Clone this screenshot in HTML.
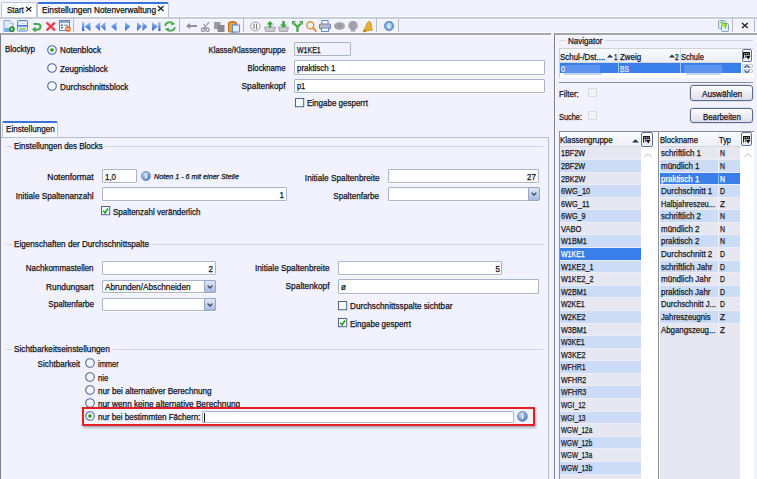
<!DOCTYPE html><html><head><meta charset="utf-8"><style>
html,body{margin:0;padding:0;width:757px;height:479px;overflow:hidden;background:#f1f2fd;}
body{position:relative;font-family:"Liberation Sans",sans-serif;}
.t{position:absolute;white-space:nowrap;}
.b{position:absolute;box-sizing:border-box;}
</style></head><body>
<div class="b" style="left:0px;top:0px;width:757px;height:17px;background:#f0f1fc;"></div>
<div class="b" style="left:0px;top:16px;width:757px;height:1px;background:#fafbff;"></div>
<div class="b" style="left:0px;top:17px;width:757px;height:2px;background:#c6cedd;"></div>
<div class="b" style="left:0px;top:19px;width:757px;height:1px;background:#fafbff;"></div>
<div class="b" style="left:1px;top:2px;width:36px;height:15.2px;background:#fbfcff;border:1px solid #bec6d6;border-bottom:none;border-radius:2px 2px 0 0;"></div>
<div class="t" style="left:7.00px;top:4.40px;height:12px;line-height:12px;font-size:8.6px;color:#101018;font-weight:normal;font-style:normal;transform:scaleX(0.925);transform-origin:left center;-webkit-text-stroke:0.25px #101018;">Start</div>
<svg class="b" style="left:26.2px;top:7.4px;overflow:visible" width="5.400000000000002" height="4.4" viewBox="0 0 5.400000000000002 4.4"><path d="M0 0L5.400000000000002 4.4M5.400000000000002 0L0 4.4" stroke="#1a1a1a" stroke-width="1.2"/></svg>
<div class="b" style="left:37px;top:2px;width:132px;height:15.2px;background:#fdfdff;border:1px solid #bec6d6;border-top:2px solid #3572dc;border-bottom:none;border-radius:2px 2px 0 0;"></div>
<div class="t" style="left:41.70px;top:4.40px;height:12px;line-height:12px;font-size:8.6px;color:#101018;font-weight:normal;font-style:normal;transform:scaleX(0.962);transform-origin:left center;-webkit-text-stroke:0.25px #101018;">Einstellungen Notenverwaltung</div>
<svg class="b" style="left:158.2px;top:5.6px;overflow:visible" width="5.600000000000023" height="5.0" viewBox="0 0 5.600000000000023 5.0"><path d="M0 0L5.600000000000023 5.0M5.600000000000023 0L0 5.0" stroke="#1a1a1a" stroke-width="1.2"/></svg>
<div class="b" style="left:0px;top:20px;width:757px;height:12px;background:#f1f2fd;"></div>
<div class="b" style="left:0px;top:32px;width:757px;height:1px;background:#fafbff;"></div>
<div class="b" style="left:0px;top:33px;width:550.5px;height:2px;background:#a6a8b0;"></div>
<div class="b" style="left:1px;top:35px;width:549px;height:1px;background:#fbfbff;"></div>
<div class="b" style="left:73.4px;top:19px;width:1.0px;height:13px;background:#b8bac4;"></div>
<div class="b" style="left:179.1px;top:19px;width:1.0px;height:13px;background:#b8bac4;"></div>
<div class="b" style="left:242.9px;top:19px;width:1.0px;height:13px;background:#b8bac4;"></div>
<div class="b" style="left:376.2px;top:19px;width:1.0px;height:13px;background:#b8bac4;"></div>
<div class="b" style="left:397.9px;top:19px;width:1.0px;height:13px;background:#b8bac4;"></div>
<div class="b" style="left:732px;top:19px;width:1px;height:13px;background:#b8bac4;"></div>
<div class="b" style="left:754px;top:19px;width:1px;height:13px;background:#b8bac4;"></div>
<svg class="b" style="left:3px;top:20px;overflow:visible" width="12" height="12" viewBox="0 0 12 12"><path d="M1 0.5h6l3 3v8H1z" fill="#e2ecf8" stroke="#7aa0d8" stroke-width="0.9"/><path d="M7 0.5v3h3" fill="#fff" stroke="#9ab8e0" stroke-width="0.8"/><rect x="1.5" y="8" width="8" height="3" fill="#66b6ee"/><circle cx="9" cy="9.2" r="2.6" fill="#3a9a3a" stroke="#2a7a2a" stroke-width="0.6"/><path d="M8.2 8l1.8 1.2-1.8 1.2z" fill="#fff"/></svg>
<svg class="b" style="left:17px;top:20.2px;overflow:visible" width="11" height="11.5" viewBox="0 0 11 11.5"><rect x="0.5" y="0.5" width="10" height="10.5" rx="1.5" fill="#e8f0fa" stroke="#5a88d0"/><rect x="1" y="5" width="9" height="1.6" fill="#4a7ad0"/><rect x="2.5" y="7.8" width="6" height="2" fill="#94d068"/><rect x="3" y="1.5" width="5" height="2" fill="#fff" stroke="#b8c4d8" stroke-width="0.5"/></svg>
<svg class="b" style="left:31.5px;top:22px;overflow:visible" width="10" height="9" viewBox="0 0 10 9"><path d="M1.5 2h4.2a2.8 2.8 0 0 1 0 5.6H3" fill="none" stroke="#4aa84a" stroke-width="2.2"/><path d="M0 7.6l3.6-3v6z" fill="#4aa84a"/></svg>
<svg class="b" style="left:45.8px;top:21.5px;overflow:visible" width="9.5" height="9" viewBox="0 0 9.5 9"><path d="M1.2 1.2l7.1 6.6M8.3 1.2l-7.1 6.6" stroke="#f04050" stroke-width="2.4" stroke-linecap="round"/></svg>
<svg class="b" style="left:59px;top:20px;overflow:visible" width="12" height="12" viewBox="0 0 12 12"><rect x="0.5" y="0.5" width="10" height="10" fill="#f4f6fb" stroke="#6a84b0"/><rect x="1" y="1" width="9" height="2" fill="#8aa8d8"/><rect x="2" y="4.5" width="2" height="1.5" fill="#4a6aa0"/><rect x="5" y="4.5" width="4" height="1.5" fill="#9ab"/><rect x="2" y="7" width="2" height="1.5" fill="#4a6aa0"/><circle cx="9" cy="9" r="2.8" fill="#e86020"/><rect x="7.3" y="8.4" width="3.4" height="1.2" fill="#fff"/></svg>
<svg class="b" style="left:82px;top:22px;overflow:visible" width="9" height="9" viewBox="0 0 9 9"><defs><linearGradient id="bg1" x1="0" y1="0" x2="0" y2="1"><stop offset="0" stop-color="#9cc4f4"/><stop offset="1" stop-color="#2b62c8"/></linearGradient><linearGradient id="gg1" x1="0" y1="0" x2="0" y2="1"><stop offset="0" stop-color="#7cd07c"/><stop offset="1" stop-color="#3a963a"/></linearGradient></defs><rect x="0" y="0" width="2.2" height="9" fill="url(#bg1)"/><path d="M8.5 0v9L2.5 4.5z" fill="url(#bg1)"/></svg>
<svg class="b" style="left:95px;top:22px;overflow:visible" width="11" height="9" viewBox="0 0 11 9"><path d="M5 0v9L0 4.5zM10.5 0v9L5.5 4.5z" fill="url(#bg1)"/></svg>
<svg class="b" style="left:111px;top:22px;overflow:visible" width="6" height="9" viewBox="0 0 6 9"><path d="M5.5 0v9L0 4.5z" fill="url(#bg1)"/></svg>
<svg class="b" style="left:125px;top:22px;overflow:visible" width="6" height="9" viewBox="0 0 6 9"><path d="M0 0v9l5.5-4.5z" fill="url(#bg1)"/></svg>
<svg class="b" style="left:137px;top:22px;overflow:visible" width="11" height="9" viewBox="0 0 11 9"><path d="M0 0v9l5-4.5zM5.5 0v9l5-4.5z" fill="url(#bg1)"/></svg>
<svg class="b" style="left:152px;top:22px;overflow:visible" width="9" height="9" viewBox="0 0 9 9"><path d="M0 0v9l6-4.5z" fill="url(#bg1)"/><rect x="6.3" y="0" width="2.2" height="9" fill="url(#bg1)"/></svg>
<svg class="b" style="left:164px;top:21px;overflow:visible" width="12" height="11" viewBox="0 0 12 11"><path d="M1.5 5a4 3.2 0 0 1 7.5-2" fill="none" stroke="#52b052" stroke-width="2"/><path d="M7.5 0.5l4 2.5-4.5 1.5z" fill="#52b052"/><path d="M10.5 6a4 3.2 0 0 1-7.5 2" fill="none" stroke="#52b052" stroke-width="2"/><path d="M4.5 10.5l-4-2.5 4.5-1.5z" fill="#52b052"/></svg>
<svg class="b" style="left:186px;top:23px;overflow:visible" width="11" height="6" viewBox="0 0 11 6"><path d="M0 3l4-3v2h7v2H4v2z" fill="#8e8e96"/></svg>
<svg class="b" style="left:201px;top:22px;overflow:visible" width="9" height="10" viewBox="0 0 9 10"><circle cx="2" cy="7.8" r="1.7" fill="none" stroke="#8a8a92" stroke-width="1.1"/><circle cx="6.5" cy="7.8" r="1.7" fill="none" stroke="#8a8a92" stroke-width="1.1"/><path d="M3 6.5L8 0M5.5 6.5L2.5 2" stroke="#8a8a92" stroke-width="1.1"/></svg>
<svg class="b" style="left:214px;top:22px;overflow:visible" width="11" height="10" viewBox="0 0 11 10"><rect x="0" y="0" width="6.5" height="7" fill="#9a9aa2"/><rect x="3.5" y="3" width="7" height="7" fill="#8a8a92"/></svg>
<svg class="b" style="left:228px;top:21px;overflow:visible" width="12" height="11" viewBox="0 0 12 11"><rect x="0.5" y="1" width="8" height="10" rx="1" fill="#e8a040" stroke="#b07020"/><rect x="2.5" y="0" width="4" height="2" fill="#c08030"/><rect x="4.5" y="4" width="7" height="7" fill="#e4eefc" stroke="#5a8ad8"/></svg>
<svg class="b" style="left:250px;top:22px;overflow:visible" width="11" height="9" viewBox="0 0 11 9"><ellipse cx="5.3" cy="4.5" rx="4.8" ry="4.3" fill="#f6f6f8" stroke="#9a9aa2"/><path d="M4 2v5M6.5 2v5" stroke="#777" stroke-width="1"/></svg>
<svg class="b" style="left:264px;top:21px;overflow:visible" width="12" height="11" viewBox="0 0 12 11"><path d="M0.5 6h11l-1 4.5h-9z" fill="#c8cad2" stroke="#9a9ca4" stroke-width="0.8"/><path d="M6 0l3.5 3.5H7.3v3H4.7v-3H2.5z" fill="#3aa83a"/></svg>
<svg class="b" style="left:278px;top:21px;overflow:visible" width="11" height="11" viewBox="0 0 11 11"><path d="M0.5 6h10l-1 4.5h-8z" fill="#c8cad2" stroke="#9a9ca4" stroke-width="0.8"/><path d="M5.5 7l3.5-3.5H6.8V0H4.2v3.5H2z" fill="#3aa83a"/></svg>
<svg class="b" style="left:292px;top:21px;overflow:visible" width="11" height="11" viewBox="0 0 11 11"><path d="M5.5 11V6L2 2.5M5.5 6L9 2.5" fill="none" stroke="#4aaa4a" stroke-width="2.4"/><path d="M0 0h4L0 4zM11 0H7l4 4z" fill="#4aaa4a"/></svg>
<svg class="b" style="left:306px;top:21px;overflow:visible" width="11" height="11" viewBox="0 0 11 11"><circle cx="4.3" cy="4.3" r="3.5" fill="#e8f2fc" stroke="#d89a3a" stroke-width="1.4"/><path d="M6.8 6.8L10.5 10.5" stroke="#d89a3a" stroke-width="2"/></svg>
<svg class="b" style="left:319px;top:20px;overflow:visible" width="12" height="12" viewBox="0 0 12 12"><rect x="3" y="0.5" width="6" height="4" fill="#fff" stroke="#5a8ad8"/><rect x="0.5" y="4" width="11" height="5" rx="1" fill="#b8bcc8" stroke="#7a7e8a"/><rect x="2.5" y="8" width="7" height="3.5" fill="#fff" stroke="#5a8ad8"/></svg>
<svg class="b" style="left:334px;top:22px;overflow:visible" width="11" height="8" viewBox="0 0 11 8"><ellipse cx="5.5" cy="4" rx="5.5" ry="3.8" fill="#a2a2a8"/><ellipse cx="5.5" cy="4" rx="1" ry="0.7" fill="#777"/></svg>
<svg class="b" style="left:348px;top:21px;overflow:visible" width="10" height="11" viewBox="0 0 10 11"><path d="M5 0a4.5 4.5 0 0 1 2.2 8.5V10.5H2.8V8.5A4.5 4.5 0 0 1 5 0z" fill="#a2a2a8"/></svg>
<svg class="b" style="left:362px;top:20px;overflow:visible" width="11" height="12" viewBox="0 0 11 12"><path d="M7 1c2 1 3 4 2.6 7.5L11 10 1 11.5l0.8-1.6C4 8 4 3 7 1z" fill="#e8b030" stroke="#b88010" stroke-width="0.6"/><circle cx="3" cy="11" r="1.2" fill="#c08010"/></svg>
<svg class="b" style="left:384px;top:21px;overflow:visible" width="10" height="10" viewBox="0 0 10 10"><circle cx="5" cy="5" r="4.7" fill="#6a9ad8" stroke="#4a7ac0" stroke-width="0.6"/><circle cx="5" cy="5" r="3" fill="#aacbf0"/><rect x="4.3" y="3.8" width="1.4" height="3.5" fill="#fff"/><rect x="4.3" y="2.2" width="1.4" height="1" fill="#fff"/></svg>
<svg class="b" style="left:718px;top:20px;overflow:visible" width="11" height="12" viewBox="0 0 11 12"><rect x="0.5" y="0.5" width="7" height="8" rx="1.2" fill="#e4eefa" stroke="#7aa2d8"/><rect x="3.5" y="3.5" width="7" height="8" rx="1.2" fill="#e4eefa" stroke="#7aa2d8"/><path d="M1.8 2.8l3-1.2 0.8 2.2 3.6-0.6-1.4 5.4-4-3.4 2.2-0.6z" fill="#58c020"/><path d="M3.2 3.6l1.6-0.5 0.6 1.6 2.4-0.4-0.9 3.4-2.4-2z" fill="#c6f040"/></svg>
<svg class="b" style="left:742px;top:23px;overflow:visible" width="5.7999999999999545" height="5" viewBox="0 0 5.7999999999999545 5"><path d="M0 0L5.7999999999999545 5M5.7999999999999545 0L0 5" stroke="#1a1a1a" stroke-width="1.2"/></svg>
<div class="b" style="left:0px;top:36px;width:550px;height:443px;background:#f1f2fd;"></div>
<div class="b" style="left:0px;top:34px;width:1px;height:445px;background:#7e8088;"></div>
<div class="b" style="left:1px;top:35px;width:549px;height:1px;background:#fbfbff;"></div>
<div class="t" style="left:5.00px;top:43.00px;height:12px;line-height:12px;font-size:9px;color:#101018;font-weight:normal;font-style:normal;transform:scaleX(0.882);transform-origin:left center;-webkit-text-stroke:0.25px #101018;">Blocktyp</div>
<svg class="b" style="left:47.3px;top:44.8px;overflow:visible" width="10" height="10" viewBox="0 0 10 10"><circle cx="5" cy="5" r="4.3" fill="#f4f5f9" stroke="#4e6898" stroke-width="1.1"/><circle cx="5" cy="5" r="1.8" fill="#22a022"/></svg>
<div class="t" style="left:60.00px;top:44.10px;height:12px;line-height:12px;font-size:9px;color:#101018;font-weight:normal;font-style:normal;transform:scaleX(0.910);transform-origin:left center;-webkit-text-stroke:0.25px #101018;">Notenblock</div>
<svg class="b" style="left:47.1px;top:63.2px;overflow:visible" width="10" height="10" viewBox="0 0 10 10"><circle cx="5" cy="5" r="4.3" fill="#f4f5f9" stroke="#4e6898" stroke-width="1.1"/></svg>
<div class="t" style="left:60.00px;top:62.70px;height:12px;line-height:12px;font-size:9px;color:#101018;font-weight:normal;font-style:normal;transform:scaleX(0.901);transform-origin:left center;-webkit-text-stroke:0.25px #101018;">Zeugnisblock</div>
<svg class="b" style="left:47.1px;top:80.8px;overflow:visible" width="10" height="10" viewBox="0 0 10 10"><circle cx="5" cy="5" r="4.3" fill="#f4f5f9" stroke="#4e6898" stroke-width="1.1"/></svg>
<div class="t" style="left:60.00px;top:80.50px;height:12px;line-height:12px;font-size:9px;color:#101018;font-weight:normal;font-style:normal;transform:scaleX(0.906);transform-origin:left center;-webkit-text-stroke:0.25px #101018;">Durchschnittsblock</div>
<div class="t" style="right:471.00px;top:44.20px;height:12px;line-height:12px;font-size:9px;color:#101018;font-weight:normal;font-style:normal;transform:scaleX(0.860);transform-origin:right center;-webkit-text-stroke:0.25px #101018;">Klasse/Klassengruppe</div>
<div class="b" style="left:294px;top:42px;width:57px;height:14px;background:#f1f2fd;border:1px solid #a9b5cc;border-radius:1px;"></div>
<div class="t" style="left:296.80px;top:44.20px;height:12px;line-height:12px;font-size:9px;color:#101018;font-weight:normal;font-style:normal;transform:scaleX(0.777);transform-origin:left center;-webkit-text-stroke:0.25px #101018;">W1KE1</div>
<div class="t" style="right:471.00px;top:62.00px;height:12px;line-height:12px;font-size:9px;color:#101018;font-weight:normal;font-style:normal;transform:scaleX(0.853);transform-origin:right center;-webkit-text-stroke:0.25px #101018;">Blockname</div>
<div class="b" style="left:294px;top:60px;width:251px;height:14.5px;background:#fff;border:1px solid #a9b5cc;border-radius:1px;box-shadow:0 1px 0 #fcfcff;"></div>
<div class="t" style="left:296.80px;top:62.00px;height:12px;line-height:12px;font-size:9px;color:#101018;font-weight:normal;font-style:normal;transform:scaleX(0.880);transform-origin:left center;-webkit-text-stroke:0.25px #101018;">praktisch 1</div>
<div class="t" style="right:471.00px;top:80.20px;height:12px;line-height:12px;font-size:9px;color:#101018;font-weight:normal;font-style:normal;transform:scaleX(0.925);transform-origin:right center;-webkit-text-stroke:0.25px #101018;">Spaltenkopf</div>
<div class="b" style="left:294px;top:78.6px;width:251px;height:14.300000000000011px;background:#fff;border:1px solid #a9b5cc;border-radius:1px;box-shadow:0 1px 0 #fcfcff;"></div>
<div class="t" style="left:296.80px;top:80.20px;height:12px;line-height:12px;font-size:9px;color:#101018;font-weight:normal;font-style:normal;transform:scaleX(0.819);transform-origin:left center;-webkit-text-stroke:0.25px #101018;">p1</div>
<svg class="b" style="left:294.7px;top:97.6px;overflow:visible" width="9" height="9" viewBox="0 0 9 9"><rect x="0.5" y="0.5" width="8.2" height="8.2" fill="#f6f7fa" stroke="#4e6494" stroke-width="1"/></svg>
<div class="t" style="left:306.80px;top:96.70px;height:12px;line-height:12px;font-size:9px;color:#101018;font-weight:normal;font-style:normal;transform:scaleX(0.888);transform-origin:left center;-webkit-text-stroke:0.25px #101018;">Eingabe gesperrt</div>
<div class="b" style="left:2px;top:121px;width:56px;height:16px;background:#fbfcff;border:1px solid #bcc6da;border-top:2px solid #3572dc;border-bottom:none;border-radius:2px 2px 0 0;"></div>
<div class="t" style="left:6.00px;top:122.90px;height:12px;line-height:12px;font-size:9px;color:#101018;font-weight:normal;font-style:normal;transform:scaleX(0.903);transform-origin:left center;-webkit-text-stroke:0.25px #101018;">Einstellungen</div>
<div class="b" style="left:1px;top:136.5px;width:548px;height:342.5px;border-top:1px solid #b4c0d6;border-right:1px solid #b4c0d6;"></div>
<div class="b" style="left:6px;top:145.5px;width:6px;height:1.0px;background:#d4d5de;"></div>
<div class="t" style="left:13.90px;top:139.50px;height:12px;line-height:12px;font-size:9px;color:#101018;font-weight:normal;font-style:normal;transform:scaleX(0.887);transform-origin:left center;-webkit-text-stroke:0.25px #101018;">Einstellungen des Blocks</div>
<div class="b" style="left:105.4px;top:145.5px;width:438.1px;height:1.0px;background:#d4d5de;"></div>
<div class="t" style="right:663.20px;top:171.40px;height:12px;line-height:12px;font-size:9px;color:#101018;font-weight:normal;font-style:normal;transform:scaleX(0.933);transform-origin:right center;-webkit-text-stroke:0.25px #101018;">Notenformat</div>
<div class="b" style="left:102.2px;top:169px;width:34.8px;height:13.800000000000011px;background:#fff;border:1px solid #a9b5cc;border-radius:1px;box-shadow:0 1px 0 #fcfcff;"></div>
<div class="t" style="left:104.50px;top:170.90px;height:12px;line-height:12px;font-size:9px;color:#101018;font-weight:normal;font-style:normal;transform:scaleX(0.879);transform-origin:left center;-webkit-text-stroke:0.25px #101018;">1,0</div>
<svg class="b" style="left:140.5px;top:171.2px;overflow:visible" width="10" height="10" viewBox="0 0 10 10"><defs><radialGradient id="ig140" cx="0.4" cy="0.35" r="0.7"><stop offset="0" stop-color="#c4dcf6"/><stop offset="1" stop-color="#4a78bc"/></radialGradient></defs><circle cx="5.0" cy="5.0" r="4.6" fill="url(#ig140)" stroke="#5a82bc" stroke-width="0.6"/><rect x="4.3" y="4.0" width="1.4" height="3.6" fill="#fff"/><rect x="4.3" y="2.0" width="1.4" height="1.2" fill="#fff"/></svg>
<div class="t" style="left:153.50px;top:171.30px;height:12px;line-height:12px;font-size:8px;color:#101018;font-weight:normal;font-style:italic;transform:scaleX(0.897);transform-origin:left center;-webkit-text-stroke:0.25px #101018;">Noten 1 - 6 mit einer Stelle</div>
<div class="t" style="right:663.20px;top:189.90px;height:12px;line-height:12px;font-size:9px;color:#101018;font-weight:normal;font-style:normal;transform:scaleX(0.909);transform-origin:right center;-webkit-text-stroke:0.25px #101018;">Initiale Spaltenanzahl</div>
<div class="b" style="left:102.2px;top:187.4px;width:184.8px;height:13.599999999999994px;background:#fff;border:1px solid #a9b5cc;border-radius:1px;box-shadow:0 1px 0 #fcfcff;"></div>
<div class="t" style="right:472.70px;top:189.20px;height:12px;line-height:12px;font-size:9px;color:#101018;font-weight:normal;font-style:normal;transform:scaleX(0.890);transform-origin:right center;-webkit-text-stroke:0.25px #101018;">1</div>
<svg class="b" style="left:101px;top:206px;overflow:visible" width="9" height="9" viewBox="0 0 9 9"><rect x="0.5" y="0.5" width="8.2" height="8.2" fill="#f6f7fa" stroke="#4e6494" stroke-width="1"/><path d="M2.2 4.6l1.8 2.3 3-4.4" fill="none" stroke="#18a018" stroke-width="1.5"/></svg>
<div class="t" style="left:112.90px;top:205.70px;height:12px;line-height:12px;font-size:9px;color:#101018;font-weight:normal;font-style:normal;transform:scaleX(0.886);transform-origin:left center;-webkit-text-stroke:0.25px #101018;">Spaltenzahl ver&auml;nderlich</div>
<div class="t" style="right:377.80px;top:171.50px;height:12px;line-height:12px;font-size:9px;color:#101018;font-weight:normal;font-style:normal;transform:scaleX(0.916);transform-origin:right center;-webkit-text-stroke:0.25px #101018;">Initiale Spaltenbreite</div>
<div class="b" style="left:387.6px;top:169.2px;width:151.89999999999998px;height:13.600000000000023px;background:#fff;border:1px solid #a9b5cc;border-radius:1px;box-shadow:0 1px 0 #fcfcff;"></div>
<div class="t" style="right:220.50px;top:170.90px;height:12px;line-height:12px;font-size:9px;color:#101018;font-weight:normal;font-style:normal;transform:scaleX(0.890);transform-origin:right center;-webkit-text-stroke:0.25px #101018;">27</div>
<div class="t" style="right:377.80px;top:189.50px;height:12px;line-height:12px;font-size:9px;color:#101018;font-weight:normal;font-style:normal;transform:scaleX(0.897);transform-origin:right center;-webkit-text-stroke:0.25px #101018;">Spaltenfarbe</div>
<div class="b" style="left:387.6px;top:187.2px;width:151.89999999999998px;height:13.800000000000011px;background:#fff;border:1px solid #a9b5cc;border-radius:1px;box-shadow:0 1px 0 #fcfcff;"></div>
<div class="b" style="left:528.0px;top:187.2px;width:11.5px;height:13.800000000000011px;background:linear-gradient(#dfe7f7,#aabbe0);border:1px solid #95a6c8;border-radius:2px;"></div>
<svg class="b" style="left:531.0px;top:192.2px;overflow:visible" width="6" height="4" viewBox="0 0 6 4"><path d="M0.6 0.6L3 3 5.4 0.6" fill="none" stroke="#34405e" stroke-width="1.3"/></svg>
<div class="b" style="left:6px;top:243.5px;width:6px;height:1.0px;background:#d4d5de;"></div>
<div class="t" style="left:14.00px;top:237.50px;height:12px;line-height:12px;font-size:9px;color:#101018;font-weight:normal;font-style:normal;transform:scaleX(0.905);transform-origin:left center;-webkit-text-stroke:0.25px #101018;">Eigenschaften der Durchschnittspalte</div>
<div class="b" style="left:152px;top:243.5px;width:391.5px;height:1.0px;background:#d4d5de;"></div>
<div class="t" style="right:663.30px;top:261.90px;height:12px;line-height:12px;font-size:9px;color:#101018;font-weight:normal;font-style:normal;transform:scaleX(0.885);transform-origin:right center;-webkit-text-stroke:0.25px #101018;">Nachkommastellen</div>
<div class="b" style="left:102.2px;top:261px;width:113.39999999999999px;height:13.800000000000011px;background:#fff;border:1px solid #a9b5cc;border-radius:1px;box-shadow:0 1px 0 #fcfcff;"></div>
<div class="t" style="right:544.30px;top:262.50px;height:12px;line-height:12px;font-size:9px;color:#101018;font-weight:normal;font-style:normal;transform:scaleX(0.890);transform-origin:right center;-webkit-text-stroke:0.25px #101018;">2</div>
<div class="t" style="right:663.30px;top:280.50px;height:12px;line-height:12px;font-size:9px;color:#101018;font-weight:normal;font-style:normal;transform:scaleX(0.920);transform-origin:right center;-webkit-text-stroke:0.25px #101018;">Rundungsart</div>
<div class="b" style="left:102.2px;top:279.5px;width:113.39999999999999px;height:13.699999999999989px;background:#fff;border:1px solid #a9b5cc;border-radius:1px;box-shadow:0 1px 0 #fcfcff;"></div>
<div class="b" style="left:204.1px;top:279.5px;width:11.5px;height:13.699999999999989px;background:linear-gradient(#dfe7f7,#aabbe0);border:1px solid #95a6c8;border-radius:2px;"></div>
<svg class="b" style="left:207.1px;top:284.5px;overflow:visible" width="6" height="4" viewBox="0 0 6 4"><path d="M0.6 0.6L3 3 5.4 0.6" fill="none" stroke="#34405e" stroke-width="1.3"/></svg>
<div class="t" style="left:104.50px;top:281.00px;height:12px;line-height:12px;font-size:9px;color:#101018;font-weight:normal;font-style:normal;transform:scaleX(0.914);transform-origin:left center;-webkit-text-stroke:0.25px #101018;">Abrunden/Abschneiden</div>
<div class="t" style="right:663.30px;top:298.20px;height:12px;line-height:12px;font-size:9px;color:#101018;font-weight:normal;font-style:normal;transform:scaleX(0.895);transform-origin:right center;-webkit-text-stroke:0.25px #101018;">Spaltenfarbe</div>
<div class="b" style="left:102.2px;top:297.6px;width:113.39999999999999px;height:13.799999999999955px;background:#fff;border:1px solid #a9b5cc;border-radius:1px;box-shadow:0 1px 0 #fcfcff;"></div>
<div class="b" style="left:204.1px;top:297.6px;width:11.5px;height:13.799999999999955px;background:linear-gradient(#dfe7f7,#aabbe0);border:1px solid #95a6c8;border-radius:2px;"></div>
<svg class="b" style="left:207.1px;top:302.6px;overflow:visible" width="6" height="4" viewBox="0 0 6 4"><path d="M0.6 0.6L3 3 5.4 0.6" fill="none" stroke="#34405e" stroke-width="1.3"/></svg>
<div class="t" style="right:427.60px;top:262.20px;height:12px;line-height:12px;font-size:9px;color:#101018;font-weight:normal;font-style:normal;transform:scaleX(0.915);transform-origin:right center;-webkit-text-stroke:0.25px #101018;">Initiale Spaltenbreite</div>
<div class="b" style="left:337.7px;top:261px;width:164.7px;height:13.800000000000011px;background:#fff;border:1px solid #a9b5cc;border-radius:1px;box-shadow:0 1px 0 #fcfcff;"></div>
<div class="t" style="right:256.70px;top:262.50px;height:12px;line-height:12px;font-size:9px;color:#101018;font-weight:normal;font-style:normal;transform:scaleX(0.890);transform-origin:right center;-webkit-text-stroke:0.25px #101018;">5</div>
<div class="t" style="right:427.60px;top:279.80px;height:12px;line-height:12px;font-size:9px;color:#101018;font-weight:normal;font-style:normal;transform:scaleX(0.925);transform-origin:right center;-webkit-text-stroke:0.25px #101018;">Spaltenkopf</div>
<div class="b" style="left:337.7px;top:279.2px;width:201.8px;height:14.400000000000034px;background:#fff;border:1px solid #a9b5cc;border-radius:1px;box-shadow:0 1px 0 #fcfcff;"></div>
<div class="t" style="left:340.50px;top:280.90px;height:12px;line-height:12px;font-size:9px;color:#101018;font-weight:normal;font-style:normal;transform:scaleX(0.890);transform-origin:left center;-webkit-text-stroke:0.25px #101018;">&oslash;</div>
<svg class="b" style="left:338px;top:301px;overflow:visible" width="9" height="9" viewBox="0 0 9 9"><rect x="0.5" y="0.5" width="8.2" height="8.2" fill="#f6f7fa" stroke="#4e6494" stroke-width="1"/></svg>
<div class="t" style="left:349.90px;top:300.30px;height:12px;line-height:12px;font-size:9px;color:#101018;font-weight:normal;font-style:normal;transform:scaleX(0.910);transform-origin:left center;-webkit-text-stroke:0.25px #101018;">Durchschnittsspalte sichtbar</div>
<svg class="b" style="left:338px;top:318.4px;overflow:visible" width="9" height="9" viewBox="0 0 9 9"><rect x="0.5" y="0.5" width="8.2" height="8.2" fill="#f6f7fa" stroke="#4e6494" stroke-width="1"/><path d="M2.2 4.6l1.8 2.3 3-4.4" fill="none" stroke="#18a018" stroke-width="1.5"/></svg>
<div class="t" style="left:349.90px;top:317.70px;height:12px;line-height:12px;font-size:9px;color:#101018;font-weight:normal;font-style:normal;transform:scaleX(0.890);transform-origin:left center;-webkit-text-stroke:0.25px #101018;">Eingabe gesperrt</div>
<div class="b" style="left:6px;top:348.5px;width:6px;height:1.0px;background:#d4d5de;"></div>
<div class="t" style="left:14.00px;top:342.50px;height:12px;line-height:12px;font-size:9px;color:#101018;font-weight:normal;font-style:normal;transform:scaleX(0.916);transform-origin:left center;-webkit-text-stroke:0.25px #101018;">Sichtbarkeitseinstellungen</div>
<div class="b" style="left:112.8px;top:348.5px;width:430.7px;height:1.0px;background:#d4d5de;"></div>
<div class="t" style="right:677.10px;top:358.30px;height:12px;line-height:12px;font-size:9px;color:#101018;font-weight:normal;font-style:normal;transform:scaleX(0.902);transform-origin:right center;-webkit-text-stroke:0.25px #101018;">Sichtbarkeit</div>
<svg class="b" style="left:85px;top:358.2px;overflow:visible" width="10" height="10" viewBox="0 0 10 10"><circle cx="5" cy="5" r="4.3" fill="#f4f5f9" stroke="#4e6898" stroke-width="1.1"/></svg>
<div class="t" style="left:97.90px;top:358.20px;height:12px;line-height:12px;font-size:9px;color:#101018;font-weight:normal;font-style:normal;transform:scaleX(0.828);transform-origin:left center;-webkit-text-stroke:0.25px #101018;">immer</div>
<svg class="b" style="left:85px;top:371.5px;overflow:visible" width="10" height="10" viewBox="0 0 10 10"><circle cx="5" cy="5" r="4.3" fill="#f4f5f9" stroke="#4e6898" stroke-width="1.1"/></svg>
<div class="t" style="left:97.90px;top:371.50px;height:12px;line-height:12px;font-size:9px;color:#101018;font-weight:normal;font-style:normal;transform:scaleX(0.857);transform-origin:left center;-webkit-text-stroke:0.25px #101018;">nie</div>
<svg class="b" style="left:85px;top:384.9px;overflow:visible" width="10" height="10" viewBox="0 0 10 10"><circle cx="5" cy="5" r="4.3" fill="#f4f5f9" stroke="#4e6898" stroke-width="1.1"/></svg>
<div class="t" style="left:97.90px;top:384.90px;height:12px;line-height:12px;font-size:9px;color:#101018;font-weight:normal;font-style:normal;transform:scaleX(0.904);transform-origin:left center;-webkit-text-stroke:0.25px #101018;">nur bei alternativer Berechnung</div>
<svg class="b" style="left:85px;top:397.8px;overflow:visible" width="10" height="10" viewBox="0 0 10 10"><circle cx="5" cy="5" r="4.3" fill="#f4f5f9" stroke="#4e6898" stroke-width="1.1"/></svg>
<div class="t" style="left:97.90px;top:397.80px;height:12px;line-height:12px;font-size:9px;color:#101018;font-weight:normal;font-style:normal;transform:scaleX(0.910);transform-origin:left center;-webkit-text-stroke:0.25px #101018;">nur wenn keine alternative Berechnung</div>
<svg class="b" style="left:85px;top:411px;overflow:visible" width="10" height="10" viewBox="0 0 10 10"><circle cx="5" cy="5" r="4.3" fill="#f4f5f9" stroke="#4e6898" stroke-width="1.1"/><circle cx="5" cy="5" r="1.8" fill="#22a022"/></svg>
<div class="t" style="left:97.90px;top:411.00px;height:12px;line-height:12px;font-size:9px;color:#101018;font-weight:normal;font-style:normal;transform:scaleX(0.894);transform-origin:left center;-webkit-text-stroke:0.25px #101018;">nur bei bestimmten F&auml;chern:</div>
<div class="b" style="left:82.3px;top:407.4px;width:452.3px;height:18.400000000000034px;border:2px solid #e41e26;box-shadow:1px 1.5px 2px rgba(60,60,60,0.35);"></div>
<div class="b" style="left:201.5px;top:410.5px;width:312.5px;height:12.800000000000011px;background:#fff;border:1px solid #a9b5cc;border-radius:1px;box-shadow:0 1px 0 #fcfcff;"></div>
<div class="b" style="left:204.2px;top:412.5px;width:1.0px;height:9.0px;background:#111;"></div>
<svg class="b" style="left:517.2px;top:411.4px;overflow:visible" width="10.8" height="10.8" viewBox="0 0 10.8 10.8"><defs><radialGradient id="ig517" cx="0.4" cy="0.35" r="0.7"><stop offset="0" stop-color="#c4dcf6"/><stop offset="1" stop-color="#4a78bc"/></radialGradient></defs><circle cx="5.4" cy="5.4" r="5.0" fill="url(#ig517)" stroke="#5a82bc" stroke-width="0.6"/><rect x="4.7" y="4.4" width="1.4" height="3.6" fill="#fff"/><rect x="4.7" y="2.4000000000000004" width="1.4" height="1.2" fill="#fff"/></svg>
<div class="b" style="left:554px;top:33px;width:203px;height:446px;background:#f1f2fd;border-left:1px solid #7e8088;border-top:2px solid #a2a4ac;"></div>
<div class="b" style="left:555px;top:35px;width:202px;height:1px;background:#fbfbff;"></div>
<div class="b" style="left:555px;top:35px;width:1px;height:444px;background:#fbfbff;"></div>
<div class="b" style="left:559px;top:40px;width:6px;height:1px;background:#d4d5de;"></div>
<div class="t" style="left:567.50px;top:35.20px;height:12px;line-height:12px;font-size:9px;color:#101018;font-weight:normal;font-style:normal;transform:scaleX(0.893);transform-origin:left center;-webkit-text-stroke:0.25px #101018;">Navigator</div>
<div class="b" style="left:604.5px;top:40px;width:148.5px;height:1px;background:#d4d5de;"></div>
<div class="b" style="left:559px;top:48.3px;width:194px;height:29.700000000000003px;background:#fff;border-top:1px solid #d0d2da;border-left:1px solid #d0d2da;"></div>
<div class="b" style="left:560px;top:49.3px;width:181px;height:13.900000000000006px;background:linear-gradient(#fafbfe,#eceef6);border-bottom:1px solid #d4d6e0;"></div>
<div class="t" style="left:560.00px;top:51.30px;height:12px;line-height:12px;font-size:9px;color:#101018;font-weight:normal;font-style:normal;transform:scaleX(0.879);transform-origin:left center;-webkit-text-stroke:0.25px #101018;">Schul-/Dst....</div>
<svg class="b" style="left:607.2px;top:54.3px;overflow:visible" width="6" height="4" viewBox="0 0 6 4"><path d="M0 3.5L3 0.5 6 3.5z" fill="#1e3448"/></svg>
<div class="t" style="left:613.80px;top:51.30px;height:12px;line-height:12px;font-size:9px;color:#101018;font-weight:normal;font-style:normal;transform:scaleX(0.698);transform-origin:left center;-webkit-text-stroke:0.25px #101018;">1</div>
<div class="b" style="left:618.3px;top:49.3px;width:1.0px;height:13.700000000000003px;background:#d8dae4;"></div>
<div class="t" style="left:619.70px;top:51.30px;height:12px;line-height:12px;font-size:9px;color:#101018;font-weight:normal;font-style:normal;transform:scaleX(0.879);transform-origin:left center;-webkit-text-stroke:0.25px #101018;">Zweig</div>
<svg class="b" style="left:668.5px;top:54.3px;overflow:visible" width="6" height="4" viewBox="0 0 6 4"><path d="M0 3.5L3 0.5 6 3.5z" fill="#1e3448"/></svg>
<div class="t" style="left:674.70px;top:51.30px;height:12px;line-height:12px;font-size:9px;color:#101018;font-weight:normal;font-style:normal;transform:scaleX(0.738);transform-origin:left center;-webkit-text-stroke:0.25px #101018;">2</div>
<div class="b" style="left:680px;top:49.3px;width:1px;height:13.700000000000003px;background:#d8dae4;"></div>
<div class="t" style="left:680.90px;top:51.30px;height:12px;line-height:12px;font-size:9px;color:#101018;font-weight:normal;font-style:normal;transform:scaleX(0.828);transform-origin:left center;-webkit-text-stroke:0.25px #101018;">Schule</div>
<div class="b" style="left:560px;top:63.2px;width:180.5px;height:10.099999999999994px;background:#3a7ee9;"></div>
<div class="b" style="left:618.3px;top:63.2px;width:1.0px;height:10.099999999999994px;background:#a6c4f2;"></div>
<div class="b" style="left:680px;top:63.2px;width:1px;height:10.099999999999994px;background:#a6c4f2;"></div>
<div class="t" style="left:560.50px;top:63.30px;height:12px;line-height:12px;font-size:9px;color:#fff;font-weight:normal;font-style:normal;transform:scaleX(0.798);transform-origin:left center;-webkit-text-stroke:0.25px #fff;">0</div>
<div class="b" style="left:565px;top:64.5px;width:35px;height:8.0px;background:#5c94ee;"></div>
<div class="b" style="left:564px;top:73.3px;width:38px;height:1.7000000000000028px;background:#c4d8f8;"></div>
<div class="t" style="left:620.30px;top:63.30px;height:12px;line-height:12px;font-size:9px;color:#e6eefc;font-weight:normal;font-style:normal;transform:scaleX(0.749);transform-origin:left center;-webkit-text-stroke:0.25px #e6eefc;">BS</div>
<div class="b" style="left:684px;top:64.5px;width:38px;height:8.0px;background:#5c94ee;"></div>
<div class="b" style="left:686px;top:73.3px;width:35px;height:1.7000000000000028px;background:#c4d8f8;"></div>
<div class="b" style="left:741.7px;top:49.3px;width:10.799999999999955px;height:12.5px;background:linear-gradient(#fff,#eef0f6);border:1.3px solid #5d7296;border-radius:2px;"></div>
<svg class="b" style="left:743.3000000000001px;top:51.75px;overflow:visible" width="8" height="8" viewBox="0 0 8 8"><path d="M0.6 6.5V0.6h5.8v2.6" fill="none" stroke="#111" stroke-width="1.1"/><path d="M0.6 2.4h5.8M2.6 0.6v5.5M4.6 0.6v2.5" stroke="#111" stroke-width="0.8"/><path d="M2.4 3.6h5.6L5.2 7.8z" fill="#000" stroke="#fff" stroke-width="0.4"/></svg>
<div class="b" style="left:741.5px;top:63.5px;width:11.0px;height:4.799999999999997px;background:linear-gradient(#fafbfe,#e4e8f2);border:1px solid #c4ccdc;border-radius:1px;"></div>
<div class="b" style="left:741.5px;top:68.7px;width:11.0px;height:4.799999999999997px;background:linear-gradient(#fafbfe,#e4e8f2);border:1px solid #c4ccdc;border-radius:1px;"></div>
<svg class="b" style="left:742px;top:63.5px;overflow:visible" width="10" height="10" viewBox="0 0 10 10"><path d="M2.5 3.6L5 1.4 7.5 3.6M2.5 6.4L5 8.6 7.5 6.4" fill="none" stroke="#2e3e60" stroke-width="1.1"/></svg>
<div class="b" style="left:559px;top:82px;width:194px;height:1px;background:#8a8c94;"></div>
<div class="t" style="left:559.00px;top:88.20px;height:12px;line-height:12px;font-size:9px;color:#101018;font-weight:normal;font-style:normal;transform:scaleX(0.880);transform-origin:left center;-webkit-text-stroke:0.25px #101018;">Filter:</div>
<div class="b" style="left:588.4px;top:88.2px;width:9.100000000000023px;height:9.200000000000003px;background:#f4f4f8;border:1px solid #d8d8e0;border-radius:1px;"></div>
<div class="t" style="left:559.00px;top:111.30px;height:12px;line-height:12px;font-size:9px;color:#101018;font-weight:normal;font-style:normal;transform:scaleX(0.821);transform-origin:left center;-webkit-text-stroke:0.25px #101018;">Suche:</div>
<div class="b" style="left:588.4px;top:111.3px;width:9.100000000000023px;height:9.100000000000009px;background:#f4f4f8;border:1px solid #d8d8e0;border-radius:1px;"></div>
<div class="b" style="left:690px;top:85px;width:63.299999999999955px;height:15.799999999999997px;background:linear-gradient(#fdfdfe,#ecedf4 50%,#dcdee9);border:1px solid #5c6d8c;border-radius:3px;box-shadow:0 0 0 0.5px #c8cce0;"></div>
<div class="t" style="left:701.65px;top:87.80px;height:12px;line-height:12px;font-size:9px;color:#101018;font-weight:normal;font-style:normal;transform:scaleX(0.908);transform-origin:left center;-webkit-text-stroke:0.25px #101018;">Ausw&auml;hlen</div>
<div class="b" style="left:690px;top:108.2px;width:63.299999999999955px;height:15.099999999999994px;background:linear-gradient(#fdfdfe,#ecedf4 50%,#dcdee9);border:1px solid #5c6d8c;border-radius:3px;box-shadow:0 0 0 0.5px #c8cce0;"></div>
<div class="t" style="left:702.75px;top:111.00px;height:12px;line-height:12px;font-size:9px;color:#101018;font-weight:normal;font-style:normal;transform:scaleX(0.868);transform-origin:left center;-webkit-text-stroke:0.25px #101018;">Bearbeiten</div>
<div class="b" style="left:558.5px;top:131.3px;width:100.5px;height:347.7px;background:#fff;border-top:1px solid #8a8c94;border-left:1px solid #8e9098;"></div>
<div class="b" style="left:559.5px;top:132.3px;width:81.5px;height:14.599999999999994px;background:linear-gradient(#fafbfe,#eef0f8);border-bottom:1px solid #d4d6e0;"></div>
<div class="t" style="left:560.00px;top:134.10px;height:12px;line-height:12px;font-size:9px;color:#101018;font-weight:normal;font-style:normal;transform:scaleX(0.876);transform-origin:left center;-webkit-text-stroke:0.25px #101018;">Klassengruppe</div>
<svg class="b" style="left:632px;top:138.6px;overflow:visible" width="7" height="4" viewBox="0 0 7 4"><path d="M0 3.5L3.5 0.3 7 3.5z" fill="#1e3448"/></svg>
<div class="b" style="left:641.2px;top:132.3px;width:12.0px;height:14.599999999999994px;background:linear-gradient(#fff,#eef0f6);border:1.3px solid #5d7296;border-radius:2px;"></div>
<svg class="b" style="left:643.4000000000001px;top:135.8px;overflow:visible" width="8" height="8" viewBox="0 0 8 8"><path d="M0.6 6.5V0.6h5.8v2.6" fill="none" stroke="#111" stroke-width="1.1"/><path d="M0.6 2.4h5.8M2.6 0.6v5.5M4.6 0.6v2.5" stroke="#111" stroke-width="0.8"/><path d="M2.4 3.6h5.6L5.2 7.8z" fill="#000" stroke="#fff" stroke-width="0.4"/></svg>
<svg class="b" style="left:644px;top:151.5px;overflow:visible" width="8" height="6" viewBox="0 0 8 6"><path d="M0.5 5L4 1.5 7.5 5" fill="none" stroke="#d4d4dc" stroke-width="1.2"/></svg>
<div class="b" style="left:559.5px;top:146.90px;width:81.5px;height:12.60px;background:#e6e7f1;"></div>
<div class="t" style="left:560.50px;top:147.39px;height:12px;line-height:12px;font-size:9px;color:#15151c;font-weight:normal;font-style:normal;transform:scaleX(0.806);transform-origin:left center;-webkit-text-stroke:0.25px #15151c;">1BF2W</div>
<div class="b" style="left:559.5px;top:159.48px;width:81.5px;height:12.60px;background:#ccdcf6;"></div>
<div class="t" style="left:560.50px;top:159.97px;height:12px;line-height:12px;font-size:9px;color:#15151c;font-weight:normal;font-style:normal;transform:scaleX(0.806);transform-origin:left center;-webkit-text-stroke:0.25px #15151c;">2BF2W</div>
<div class="b" style="left:559.5px;top:158.98px;width:81.5px;height:1px;background:#ecedf7;"></div>
<div class="b" style="left:559.5px;top:172.06px;width:81.5px;height:12.60px;background:#e6e7f1;"></div>
<div class="t" style="left:560.50px;top:172.55px;height:12px;line-height:12px;font-size:9px;color:#15151c;font-weight:normal;font-style:normal;transform:scaleX(0.800);transform-origin:left center;-webkit-text-stroke:0.25px #15151c;">2BK2W</div>
<div class="b" style="left:559.5px;top:171.56px;width:81.5px;height:1px;background:#ecedf7;"></div>
<div class="b" style="left:559.5px;top:184.64px;width:81.5px;height:12.60px;background:#ccdcf6;"></div>
<div class="t" style="left:560.50px;top:185.13px;height:12px;line-height:12px;font-size:9px;color:#15151c;font-weight:normal;font-style:normal;transform:scaleX(0.819);transform-origin:left center;-webkit-text-stroke:0.25px #15151c;">6WG_10</div>
<div class="b" style="left:559.5px;top:184.14px;width:81.5px;height:1px;background:#ecedf7;"></div>
<div class="b" style="left:559.5px;top:197.22px;width:81.5px;height:12.60px;background:#e6e7f1;"></div>
<div class="t" style="left:560.50px;top:197.71px;height:12px;line-height:12px;font-size:9px;color:#15151c;font-weight:normal;font-style:normal;transform:scaleX(0.820);transform-origin:left center;-webkit-text-stroke:0.25px #15151c;">6WG_11</div>
<div class="b" style="left:559.5px;top:196.72px;width:81.5px;height:1px;background:#ecedf7;"></div>
<div class="b" style="left:559.5px;top:209.80px;width:81.5px;height:12.60px;background:#ccdcf6;"></div>
<div class="t" style="left:560.50px;top:210.29px;height:12px;line-height:12px;font-size:9px;color:#15151c;font-weight:normal;font-style:normal;transform:scaleX(0.806);transform-origin:left center;-webkit-text-stroke:0.25px #15151c;">6WG_9</div>
<div class="b" style="left:559.5px;top:209.30px;width:81.5px;height:1px;background:#ecedf7;"></div>
<div class="b" style="left:559.5px;top:222.38px;width:81.5px;height:12.60px;background:#e6e7f1;"></div>
<div class="t" style="left:560.50px;top:222.87px;height:12px;line-height:12px;font-size:9px;color:#15151c;font-weight:normal;font-style:normal;transform:scaleX(0.842);transform-origin:left center;-webkit-text-stroke:0.25px #15151c;">VABO</div>
<div class="b" style="left:559.5px;top:221.88px;width:81.5px;height:1px;background:#ecedf7;"></div>
<div class="b" style="left:559.5px;top:234.96px;width:81.5px;height:12.60px;background:#ccdcf6;"></div>
<div class="t" style="left:560.50px;top:235.45px;height:12px;line-height:12px;font-size:9px;color:#15151c;font-weight:normal;font-style:normal;transform:scaleX(0.806);transform-origin:left center;-webkit-text-stroke:0.25px #15151c;">W1BM1</div>
<div class="b" style="left:559.5px;top:234.46px;width:81.5px;height:1px;background:#ecedf7;"></div>
<div class="b" style="left:559.5px;top:247.54px;width:81.5px;height:12.60px;background:#3a7ee9;"></div>
<div class="t" style="left:560.50px;top:248.03px;height:12px;line-height:12px;font-size:9px;color:#fff;font-weight:normal;font-style:normal;transform:scaleX(0.777);transform-origin:left center;-webkit-text-stroke:0.25px #fff;">W1KE1</div>
<div class="b" style="left:559.5px;top:247.04px;width:81.5px;height:1px;background:#ecedf7;"></div>
<div class="b" style="left:559.5px;top:260.12px;width:81.5px;height:12.60px;background:#ccdcf6;"></div>
<div class="t" style="left:560.50px;top:260.61px;height:12px;line-height:12px;font-size:9px;color:#15151c;font-weight:normal;font-style:normal;transform:scaleX(0.799);transform-origin:left center;-webkit-text-stroke:0.25px #15151c;">W1KE2_1</div>
<div class="b" style="left:559.5px;top:259.62px;width:81.5px;height:1px;background:#ecedf7;"></div>
<div class="b" style="left:559.5px;top:272.70px;width:81.5px;height:12.60px;background:#e6e7f1;"></div>
<div class="t" style="left:560.50px;top:273.19px;height:12px;line-height:12px;font-size:9px;color:#15151c;font-weight:normal;font-style:normal;transform:scaleX(0.804);transform-origin:left center;-webkit-text-stroke:0.25px #15151c;">W1KE2_2</div>
<div class="b" style="left:559.5px;top:272.20px;width:81.5px;height:1px;background:#ecedf7;"></div>
<div class="b" style="left:559.5px;top:285.28px;width:81.5px;height:12.60px;background:#ccdcf6;"></div>
<div class="t" style="left:560.50px;top:285.77px;height:12px;line-height:12px;font-size:9px;color:#15151c;font-weight:normal;font-style:normal;transform:scaleX(0.806);transform-origin:left center;-webkit-text-stroke:0.25px #15151c;">W2BM1</div>
<div class="b" style="left:559.5px;top:284.78px;width:81.5px;height:1px;background:#ecedf7;"></div>
<div class="b" style="left:559.5px;top:297.86px;width:81.5px;height:12.60px;background:#e6e7f1;"></div>
<div class="t" style="left:560.50px;top:298.35px;height:12px;line-height:12px;font-size:9px;color:#15151c;font-weight:normal;font-style:normal;transform:scaleX(0.777);transform-origin:left center;-webkit-text-stroke:0.25px #15151c;">W2KE1</div>
<div class="b" style="left:559.5px;top:297.36px;width:81.5px;height:1px;background:#ecedf7;"></div>
<div class="b" style="left:559.5px;top:310.44px;width:81.5px;height:12.60px;background:#ccdcf6;"></div>
<div class="t" style="left:560.50px;top:310.93px;height:12px;line-height:12px;font-size:9px;color:#15151c;font-weight:normal;font-style:normal;transform:scaleX(0.806);transform-origin:left center;-webkit-text-stroke:0.25px #15151c;">W2KE2</div>
<div class="b" style="left:559.5px;top:309.94px;width:81.5px;height:1px;background:#ecedf7;"></div>
<div class="b" style="left:559.5px;top:323.02px;width:81.5px;height:12.60px;background:#e6e7f1;"></div>
<div class="t" style="left:560.50px;top:323.51px;height:12px;line-height:12px;font-size:9px;color:#15151c;font-weight:normal;font-style:normal;transform:scaleX(0.806);transform-origin:left center;-webkit-text-stroke:0.25px #15151c;">W3BM1</div>
<div class="b" style="left:559.5px;top:322.52px;width:81.5px;height:1px;background:#ecedf7;"></div>
<div class="b" style="left:559.5px;top:335.60px;width:81.5px;height:12.60px;background:#ccdcf6;"></div>
<div class="t" style="left:560.50px;top:336.09px;height:12px;line-height:12px;font-size:9px;color:#15151c;font-weight:normal;font-style:normal;transform:scaleX(0.777);transform-origin:left center;-webkit-text-stroke:0.25px #15151c;">W3KE1</div>
<div class="b" style="left:559.5px;top:335.10px;width:81.5px;height:1px;background:#ecedf7;"></div>
<div class="b" style="left:559.5px;top:348.18px;width:81.5px;height:12.60px;background:#e6e7f1;"></div>
<div class="t" style="left:560.50px;top:348.67px;height:12px;line-height:12px;font-size:9px;color:#15151c;font-weight:normal;font-style:normal;transform:scaleX(0.806);transform-origin:left center;-webkit-text-stroke:0.25px #15151c;">W3KE2</div>
<div class="b" style="left:559.5px;top:347.68px;width:81.5px;height:1px;background:#ecedf7;"></div>
<div class="b" style="left:559.5px;top:360.76px;width:81.5px;height:12.60px;background:#ccdcf6;"></div>
<div class="t" style="left:560.50px;top:361.25px;height:12px;line-height:12px;font-size:9px;color:#15151c;font-weight:normal;font-style:normal;transform:scaleX(0.769);transform-origin:left center;-webkit-text-stroke:0.25px #15151c;">WFHR1</div>
<div class="b" style="left:559.5px;top:360.26px;width:81.5px;height:1px;background:#ecedf7;"></div>
<div class="b" style="left:559.5px;top:373.34px;width:81.5px;height:12.60px;background:#e6e7f1;"></div>
<div class="t" style="left:560.50px;top:373.83px;height:12px;line-height:12px;font-size:9px;color:#15151c;font-weight:normal;font-style:normal;transform:scaleX(0.787);transform-origin:left center;-webkit-text-stroke:0.25px #15151c;">WFHR2</div>
<div class="b" style="left:559.5px;top:372.84px;width:81.5px;height:1px;background:#ecedf7;"></div>
<div class="b" style="left:559.5px;top:385.92px;width:81.5px;height:12.60px;background:#ccdcf6;"></div>
<div class="t" style="left:560.50px;top:386.41px;height:12px;line-height:12px;font-size:9px;color:#15151c;font-weight:normal;font-style:normal;transform:scaleX(0.787);transform-origin:left center;-webkit-text-stroke:0.25px #15151c;">WFHR3</div>
<div class="b" style="left:559.5px;top:385.42px;width:81.5px;height:1px;background:#ecedf7;"></div>
<div class="b" style="left:559.5px;top:398.50px;width:81.5px;height:12.60px;background:#e6e7f1;"></div>
<div class="t" style="left:560.50px;top:398.99px;height:12px;line-height:12px;font-size:9px;color:#15151c;font-weight:normal;font-style:normal;transform:scaleX(0.745);transform-origin:left center;-webkit-text-stroke:0.25px #15151c;">WGI_12</div>
<div class="b" style="left:559.5px;top:398.00px;width:81.5px;height:1px;background:#ecedf7;"></div>
<div class="b" style="left:559.5px;top:411.08px;width:81.5px;height:12.60px;background:#ccdcf6;"></div>
<div class="t" style="left:560.50px;top:411.57px;height:12px;line-height:12px;font-size:9px;color:#15151c;font-weight:normal;font-style:normal;transform:scaleX(0.745);transform-origin:left center;-webkit-text-stroke:0.25px #15151c;">WGI_13</div>
<div class="b" style="left:559.5px;top:410.58px;width:81.5px;height:1px;background:#ecedf7;"></div>
<div class="b" style="left:559.5px;top:423.66px;width:81.5px;height:12.60px;background:#e6e7f1;"></div>
<div class="t" style="left:560.50px;top:424.15px;height:12px;line-height:12px;font-size:9px;color:#15151c;font-weight:normal;font-style:normal;transform:scaleX(0.709);transform-origin:left center;-webkit-text-stroke:0.25px #15151c;">WGW_12a</div>
<div class="b" style="left:559.5px;top:423.16px;width:81.5px;height:1px;background:#ecedf7;"></div>
<div class="b" style="left:559.5px;top:436.24px;width:81.5px;height:12.60px;background:#ccdcf6;"></div>
<div class="t" style="left:560.50px;top:436.73px;height:12px;line-height:12px;font-size:9px;color:#15151c;font-weight:normal;font-style:normal;transform:scaleX(0.709);transform-origin:left center;-webkit-text-stroke:0.25px #15151c;">WGW_12b</div>
<div class="b" style="left:559.5px;top:435.74px;width:81.5px;height:1px;background:#ecedf7;"></div>
<div class="b" style="left:559.5px;top:448.82px;width:81.5px;height:12.60px;background:#e6e7f1;"></div>
<div class="t" style="left:560.50px;top:449.31px;height:12px;line-height:12px;font-size:9px;color:#15151c;font-weight:normal;font-style:normal;transform:scaleX(0.709);transform-origin:left center;-webkit-text-stroke:0.25px #15151c;">WGW_13a</div>
<div class="b" style="left:559.5px;top:448.32px;width:81.5px;height:1px;background:#ecedf7;"></div>
<div class="b" style="left:559.5px;top:461.40px;width:81.5px;height:12.60px;background:#ccdcf6;"></div>
<div class="t" style="left:560.50px;top:461.89px;height:12px;line-height:12px;font-size:9px;color:#15151c;font-weight:normal;font-style:normal;transform:scaleX(0.709);transform-origin:left center;-webkit-text-stroke:0.25px #15151c;">WGW_13b</div>
<div class="b" style="left:559.5px;top:460.90px;width:81.5px;height:1px;background:#ecedf7;"></div>
<div class="b" style="left:559.5px;top:473.98px;width:81.5px;height:5.019999999999982px;background:#e6e7f1;"></div>
<div class="b" style="left:657.5px;top:131.3px;width:1.5px;height:347.7px;background:#8e9098;"></div>
<div class="b" style="left:659px;top:131.3px;width:95px;height:347.7px;background:#fff;border-top:1px solid #8a8c94;"></div>
<div class="b" style="left:659.5px;top:132.3px;width:81.5px;height:14.599999999999994px;background:linear-gradient(#fafbfe,#eef0f8);border-bottom:1px solid #d4d6e0;"></div>
<div class="t" style="left:660.00px;top:134.10px;height:12px;line-height:12px;font-size:9px;color:#101018;font-weight:normal;font-style:normal;transform:scaleX(0.853);transform-origin:left center;-webkit-text-stroke:0.25px #101018;">Blockname</div>
<div class="b" style="left:717.8px;top:133px;width:1.0px;height:13px;background:#e0e2ea;"></div>
<div class="t" style="left:719.30px;top:134.10px;height:12px;line-height:12px;font-size:9px;color:#101018;font-weight:normal;font-style:normal;transform:scaleX(0.827);transform-origin:left center;-webkit-text-stroke:0.25px #101018;">Typ</div>
<div class="b" style="left:741.2px;top:132.3px;width:11.0px;height:14.199999999999989px;background:linear-gradient(#fff,#eef0f6);border:1.3px solid #5d7296;border-radius:2px;"></div>
<svg class="b" style="left:742.9000000000001px;top:135.6px;overflow:visible" width="8" height="8" viewBox="0 0 8 8"><path d="M0.6 6.5V0.6h5.8v2.6" fill="none" stroke="#111" stroke-width="1.1"/><path d="M0.6 2.4h5.8M2.6 0.6v5.5M4.6 0.6v2.5" stroke="#111" stroke-width="0.8"/><path d="M2.4 3.6h5.6L5.2 7.8z" fill="#000" stroke="#fff" stroke-width="0.4"/></svg>
<svg class="b" style="left:744px;top:151.5px;overflow:visible" width="8" height="6" viewBox="0 0 8 6"><path d="M0.5 5L4 1.5 7.5 5" fill="none" stroke="#d4d4dc" stroke-width="1.2"/></svg>
<div class="b" style="left:659.8px;top:146.90px;width:80.2px;height:12.60px;background:#e6e7f1;"></div>
<div class="b" style="left:718px;top:146.90px;width:1px;height:12.58px;background:#f2f3fa;"></div>
<div class="t" style="left:660.70px;top:147.39px;height:12px;line-height:12px;font-size:9px;color:#15151c;font-weight:normal;font-style:normal;transform:scaleX(0.889);transform-origin:left center;-webkit-text-stroke:0.25px #15151c;">schriftlich 1</div>
<div class="t" style="left:720.20px;top:147.39px;height:12px;line-height:12px;font-size:9px;color:#15151c;font-weight:normal;font-style:normal;transform:scaleX(0.769);transform-origin:left center;-webkit-text-stroke:0.25px #15151c;">N</div>
<div class="b" style="left:659.8px;top:159.48px;width:80.2px;height:12.60px;background:#ccdcf6;"></div>
<div class="b" style="left:718px;top:159.48px;width:1px;height:12.58px;background:#f2f3fa;"></div>
<div class="t" style="left:660.70px;top:159.97px;height:12px;line-height:12px;font-size:9px;color:#15151c;font-weight:normal;font-style:normal;transform:scaleX(0.884);transform-origin:left center;-webkit-text-stroke:0.25px #15151c;">m&uuml;ndlich 1</div>
<div class="t" style="left:720.20px;top:159.97px;height:12px;line-height:12px;font-size:9px;color:#15151c;font-weight:normal;font-style:normal;transform:scaleX(0.769);transform-origin:left center;-webkit-text-stroke:0.25px #15151c;">N</div>
<div class="b" style="left:659.8px;top:158.98px;width:80.2px;height:1px;background:#ecedf7;"></div>
<div class="b" style="left:659.8px;top:172.06px;width:80.2px;height:12.60px;background:#3a7ee9;"></div>
<div class="b" style="left:718px;top:172.06px;width:1px;height:12.58px;background:#8ab4f0;"></div>
<div class="t" style="left:660.70px;top:172.55px;height:12px;line-height:12px;font-size:9px;color:#fff;font-weight:normal;font-style:normal;transform:scaleX(0.880);transform-origin:left center;-webkit-text-stroke:0.25px #fff;">praktisch 1</div>
<div class="t" style="left:720.20px;top:172.55px;height:12px;line-height:12px;font-size:9px;color:#fff;font-weight:normal;font-style:normal;transform:scaleX(0.769);transform-origin:left center;-webkit-text-stroke:0.25px #fff;">N</div>
<div class="b" style="left:659.8px;top:171.56px;width:80.2px;height:1px;background:#ecedf7;"></div>
<div class="b" style="left:659.8px;top:184.64px;width:80.2px;height:12.60px;background:#ccdcf6;"></div>
<div class="b" style="left:718px;top:184.64px;width:1px;height:12.58px;background:#f2f3fa;"></div>
<div class="t" style="left:660.70px;top:185.13px;height:12px;line-height:12px;font-size:9px;color:#15151c;font-weight:normal;font-style:normal;transform:scaleX(0.892);transform-origin:left center;-webkit-text-stroke:0.25px #15151c;">Durchschnitt 1</div>
<div class="t" style="left:720.20px;top:185.13px;height:12px;line-height:12px;font-size:9px;color:#15151c;font-weight:normal;font-style:normal;transform:scaleX(0.769);transform-origin:left center;-webkit-text-stroke:0.25px #15151c;">D</div>
<div class="b" style="left:659.8px;top:184.14px;width:80.2px;height:1px;background:#ecedf7;"></div>
<div class="b" style="left:659.8px;top:197.22px;width:80.2px;height:12.60px;background:#e6e7f1;"></div>
<div class="b" style="left:718px;top:197.22px;width:1px;height:12.58px;background:#f2f3fa;"></div>
<div class="t" style="left:660.70px;top:197.71px;height:12px;line-height:12px;font-size:9px;color:#15151c;font-weight:normal;font-style:normal;transform:scaleX(0.830);transform-origin:left center;-webkit-text-stroke:0.25px #15151c;">Halbjahreszeu...</div>
<div class="t" style="left:720.20px;top:197.71px;height:12px;line-height:12px;font-size:9px;color:#15151c;font-weight:normal;font-style:normal;transform:scaleX(0.909);transform-origin:left center;-webkit-text-stroke:0.25px #15151c;">Z</div>
<div class="b" style="left:659.8px;top:196.72px;width:80.2px;height:1px;background:#ecedf7;"></div>
<div class="b" style="left:659.8px;top:209.80px;width:80.2px;height:12.60px;background:#ccdcf6;"></div>
<div class="b" style="left:718px;top:209.80px;width:1px;height:12.58px;background:#f2f3fa;"></div>
<div class="t" style="left:660.70px;top:210.29px;height:12px;line-height:12px;font-size:9px;color:#15151c;font-weight:normal;font-style:normal;transform:scaleX(0.889);transform-origin:left center;-webkit-text-stroke:0.25px #15151c;">schriftlich 2</div>
<div class="t" style="left:720.20px;top:210.29px;height:12px;line-height:12px;font-size:9px;color:#15151c;font-weight:normal;font-style:normal;transform:scaleX(0.769);transform-origin:left center;-webkit-text-stroke:0.25px #15151c;">N</div>
<div class="b" style="left:659.8px;top:209.30px;width:80.2px;height:1px;background:#ecedf7;"></div>
<div class="b" style="left:659.8px;top:222.38px;width:80.2px;height:12.60px;background:#e6e7f1;"></div>
<div class="b" style="left:718px;top:222.38px;width:1px;height:12.58px;background:#f2f3fa;"></div>
<div class="t" style="left:660.70px;top:222.87px;height:12px;line-height:12px;font-size:9px;color:#15151c;font-weight:normal;font-style:normal;transform:scaleX(0.884);transform-origin:left center;-webkit-text-stroke:0.25px #15151c;">m&uuml;ndlich 2</div>
<div class="t" style="left:720.20px;top:222.87px;height:12px;line-height:12px;font-size:9px;color:#15151c;font-weight:normal;font-style:normal;transform:scaleX(0.769);transform-origin:left center;-webkit-text-stroke:0.25px #15151c;">N</div>
<div class="b" style="left:659.8px;top:221.88px;width:80.2px;height:1px;background:#ecedf7;"></div>
<div class="b" style="left:659.8px;top:234.96px;width:80.2px;height:12.60px;background:#ccdcf6;"></div>
<div class="b" style="left:718px;top:234.96px;width:1px;height:12.58px;background:#f2f3fa;"></div>
<div class="t" style="left:660.70px;top:235.45px;height:12px;line-height:12px;font-size:9px;color:#15151c;font-weight:normal;font-style:normal;transform:scaleX(0.880);transform-origin:left center;-webkit-text-stroke:0.25px #15151c;">praktisch 2</div>
<div class="t" style="left:720.20px;top:235.45px;height:12px;line-height:12px;font-size:9px;color:#15151c;font-weight:normal;font-style:normal;transform:scaleX(0.769);transform-origin:left center;-webkit-text-stroke:0.25px #15151c;">N</div>
<div class="b" style="left:659.8px;top:234.46px;width:80.2px;height:1px;background:#ecedf7;"></div>
<div class="b" style="left:659.8px;top:247.54px;width:80.2px;height:12.60px;background:#e6e7f1;"></div>
<div class="b" style="left:718px;top:247.54px;width:1px;height:12.58px;background:#f2f3fa;"></div>
<div class="t" style="left:660.70px;top:248.03px;height:12px;line-height:12px;font-size:9px;color:#15151c;font-weight:normal;font-style:normal;transform:scaleX(0.892);transform-origin:left center;-webkit-text-stroke:0.25px #15151c;">Durchschnitt 2</div>
<div class="t" style="left:720.20px;top:248.03px;height:12px;line-height:12px;font-size:9px;color:#15151c;font-weight:normal;font-style:normal;transform:scaleX(0.769);transform-origin:left center;-webkit-text-stroke:0.25px #15151c;">D</div>
<div class="b" style="left:659.8px;top:247.04px;width:80.2px;height:1px;background:#ecedf7;"></div>
<div class="b" style="left:659.8px;top:260.12px;width:80.2px;height:12.60px;background:#ccdcf6;"></div>
<div class="b" style="left:718px;top:260.12px;width:1px;height:12.58px;background:#f2f3fa;"></div>
<div class="t" style="left:660.70px;top:260.61px;height:12px;line-height:12px;font-size:9px;color:#15151c;font-weight:normal;font-style:normal;transform:scaleX(0.895);transform-origin:left center;-webkit-text-stroke:0.25px #15151c;">schriftlich Jahr</div>
<div class="t" style="left:720.20px;top:260.61px;height:12px;line-height:12px;font-size:9px;color:#15151c;font-weight:normal;font-style:normal;transform:scaleX(0.769);transform-origin:left center;-webkit-text-stroke:0.25px #15151c;">D</div>
<div class="b" style="left:659.8px;top:259.62px;width:80.2px;height:1px;background:#ecedf7;"></div>
<div class="b" style="left:659.8px;top:272.70px;width:80.2px;height:12.60px;background:#e6e7f1;"></div>
<div class="b" style="left:718px;top:272.70px;width:1px;height:12.58px;background:#f2f3fa;"></div>
<div class="t" style="left:660.70px;top:273.19px;height:12px;line-height:12px;font-size:9px;color:#15151c;font-weight:normal;font-style:normal;transform:scaleX(0.892);transform-origin:left center;-webkit-text-stroke:0.25px #15151c;">m&uuml;ndlich Jahr</div>
<div class="t" style="left:720.20px;top:273.19px;height:12px;line-height:12px;font-size:9px;color:#15151c;font-weight:normal;font-style:normal;transform:scaleX(0.769);transform-origin:left center;-webkit-text-stroke:0.25px #15151c;">D</div>
<div class="b" style="left:659.8px;top:272.20px;width:80.2px;height:1px;background:#ecedf7;"></div>
<div class="b" style="left:659.8px;top:285.28px;width:80.2px;height:12.60px;background:#ccdcf6;"></div>
<div class="b" style="left:718px;top:285.28px;width:1px;height:12.58px;background:#f2f3fa;"></div>
<div class="t" style="left:660.70px;top:285.77px;height:12px;line-height:12px;font-size:9px;color:#15151c;font-weight:normal;font-style:normal;transform:scaleX(0.883);transform-origin:left center;-webkit-text-stroke:0.25px #15151c;">praktisch Jahr</div>
<div class="t" style="left:720.20px;top:285.77px;height:12px;line-height:12px;font-size:9px;color:#15151c;font-weight:normal;font-style:normal;transform:scaleX(0.769);transform-origin:left center;-webkit-text-stroke:0.25px #15151c;">D</div>
<div class="b" style="left:659.8px;top:284.78px;width:80.2px;height:1px;background:#ecedf7;"></div>
<div class="b" style="left:659.8px;top:297.86px;width:80.2px;height:12.60px;background:#e6e7f1;"></div>
<div class="b" style="left:718px;top:297.86px;width:1px;height:12.58px;background:#f2f3fa;"></div>
<div class="t" style="left:660.70px;top:298.35px;height:12px;line-height:12px;font-size:9px;color:#15151c;font-weight:normal;font-style:normal;transform:scaleX(0.852);transform-origin:left center;-webkit-text-stroke:0.25px #15151c;">Durchschnitt J...</div>
<div class="t" style="left:720.20px;top:298.35px;height:12px;line-height:12px;font-size:9px;color:#15151c;font-weight:normal;font-style:normal;transform:scaleX(0.769);transform-origin:left center;-webkit-text-stroke:0.25px #15151c;">D</div>
<div class="b" style="left:659.8px;top:297.36px;width:80.2px;height:1px;background:#ecedf7;"></div>
<div class="b" style="left:659.8px;top:310.44px;width:80.2px;height:12.60px;background:#ccdcf6;"></div>
<div class="b" style="left:718px;top:310.44px;width:1px;height:12.58px;background:#f2f3fa;"></div>
<div class="t" style="left:660.70px;top:310.93px;height:12px;line-height:12px;font-size:9px;color:#15151c;font-weight:normal;font-style:normal;transform:scaleX(0.853);transform-origin:left center;-webkit-text-stroke:0.25px #15151c;">Jahreszeugnis</div>
<div class="t" style="left:720.20px;top:310.93px;height:12px;line-height:12px;font-size:9px;color:#15151c;font-weight:normal;font-style:normal;transform:scaleX(0.909);transform-origin:left center;-webkit-text-stroke:0.25px #15151c;">Z</div>
<div class="b" style="left:659.8px;top:309.94px;width:80.2px;height:1px;background:#ecedf7;"></div>
<div class="b" style="left:659.8px;top:323.02px;width:80.2px;height:12.60px;background:#e6e7f1;"></div>
<div class="b" style="left:718px;top:323.02px;width:1px;height:12.58px;background:#f2f3fa;"></div>
<div class="t" style="left:660.70px;top:323.51px;height:12px;line-height:12px;font-size:9px;color:#15151c;font-weight:normal;font-style:normal;transform:scaleX(0.871);transform-origin:left center;-webkit-text-stroke:0.25px #15151c;">Abgangszeug...</div>
<div class="t" style="left:720.20px;top:323.51px;height:12px;line-height:12px;font-size:9px;color:#15151c;font-weight:normal;font-style:normal;transform:scaleX(0.909);transform-origin:left center;-webkit-text-stroke:0.25px #15151c;">Z</div>
<div class="b" style="left:659.8px;top:322.52px;width:80.2px;height:1px;background:#ecedf7;"></div>
<div class="b" style="left:659.8px;top:335.6px;width:80.20000000000005px;height:143.39999999999998px;background:#e6e7f1;"></div>
</body></html>
